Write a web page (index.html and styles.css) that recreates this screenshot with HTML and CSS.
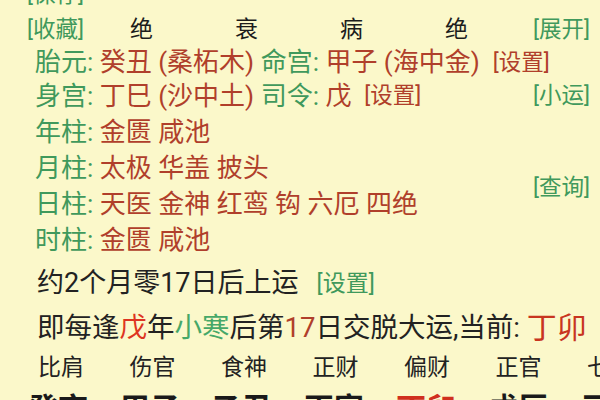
FILE: index.html
```html
<!DOCTYPE html>
<html lang="zh">
<head>
<meta charset="utf-8">
<link rel="stylesheet" href="styles.css">
</head>
<body>
<div class="page">
  <div class="row r-top"><span class="g small">[保存]</span></div>
  <div class="row r-hdr">
    <span class="g small lbl">[收藏]</span>
    <span class="cell">绝</span><span class="cell">衰</span><span class="cell">病</span><span class="cell last">绝</span>
    <span class="g small side">[展开]</span>
  </div>
  <div class="row r-item r-first">
    <span class="g">胎元:</span>&nbsp;<span class="v">癸丑 (桑柘木)</span>&nbsp;<span class="g">命宫:</span>&nbsp;<span class="v">甲子 (海中金)</span>&nbsp;&nbsp;<span class="v small">[设置]</span>
  </div>
  <div class="row r-item">
    <span class="g">身宫:</span>&nbsp;<span class="v">丁巳 (沙中土)</span>&nbsp;<span class="g">司令:</span>&nbsp;<span class="v">戊</span>&nbsp;&nbsp;<span class="v small">[设置]</span>
    <span class="g small side">[小运]</span>
  </div>
  <div class="row r-item"><span class="g">年柱:</span>&nbsp;<span class="v">金匮 咸池</span></div>
  <div class="row r-item"><span class="g">月柱:</span>&nbsp;<span class="v">太极 华盖 披头</span></div>
  <div class="row r-item">
    <span class="g">日柱:</span>&nbsp;<span class="v">天医 金神 红鸾 钩 六厄 四绝</span>
    <span class="g small side up">[查询]</span>
  </div>
  <div class="row r-item"><span class="g">时柱:</span>&nbsp;<span class="v">金匮 咸池</span></div>
  <div class="row r-yun"><span class="k">约2个月零17日后上运</span><span class="g small set">[设置]</span></div>
  <div class="row r-jiao"><span class="k">即每逢<span class="red">戊</span>年<span class="gl">小寒</span>后第<span class="v">17</span>日交脱大运,当前:&nbsp;</span><span class="cur">丁卯</span></div>
  <div class="row r-shen">
    <span class="sc">比肩</span><span class="sc">伤官</span><span class="sc">食神</span><span class="sc">正财</span><span class="sc">偏财</span><span class="sc">正官</span><span class="sc">七杀</span>
  </div>
  <div class="row r-gz">
    <span class="gz">癸亥</span><span class="gz">甲子</span><span class="gz">乙丑</span><span class="gz">丙寅</span><span class="gz now">丁卯</span><span class="gz">戊辰</span><span class="gz">己巳</span>
  </div>
</div>
</body>
</html>
```

FILE: styles.css
```css
html, body {
  margin: 0;
  padding: 0;
  width: 600px;
  height: 400px;
  overflow: hidden;
  background: #fbf8ca;
}

.page {
  font-family: Roboto, "Noto Sans CJK SC", sans-serif;
  color: #222;
  padding-right: 10px;
  white-space: nowrap;
}

.row {
  display: flex;
  align-items: center;
}

.g { color: #40995c; }
.gl { color: #46a868; }
.v { color: #b03f2b; }
.red { color: #de3421; }
.small { font-size: 22.5px; }

.side {
  margin-left: auto;
}

.up {
  align-self: flex-start;
  margin-top: -8px;
  line-height: 24px;
}

.r-top {
  height: 36px;
  margin-top: -26px;
  padding-left: 27px;
}

.r-hdr {
  height: 34px;
  padding-left: 27px;
}

.lbl {
  width: 103px;
}

.cell {
  width: 105px;
  font-size: 23px;
  color: #1c1c1c;
}

.cell.last {
  width: auto;
}

.r-item {
  height: 36px;
  padding-left: 35px;
  font-size: 26px;
}

.r-first {
  height: 31px;
}

.r-yun {
  height: 51px;
  padding-left: 37px;
  font-size: 27px;
  color: #222;
}

.set {
  margin-left: 18px;
  font-size: 23px;
}

.r-jiao {
  height: 38px;
  padding-left: 37px;
  font-size: 27.5px;
  color: #222;
}

.cur {
  font-size: 30px;
  color: #c8351f;
}

.r-shen {
  height: 42px;
  padding-left: 38px;
  font-size: 23px;
  color: #222;
}

.sc {
  flex: 0 0 91.5px;
}

.r-gz {
  height: 40px;
  padding-left: 28px;
  font-size: 30px;
  font-weight: bold;
  color: #1a1a1a;
}

.gz {
  flex: 0 0 92px;
}

.gz.now {
  color: #d0301e;
}
```
